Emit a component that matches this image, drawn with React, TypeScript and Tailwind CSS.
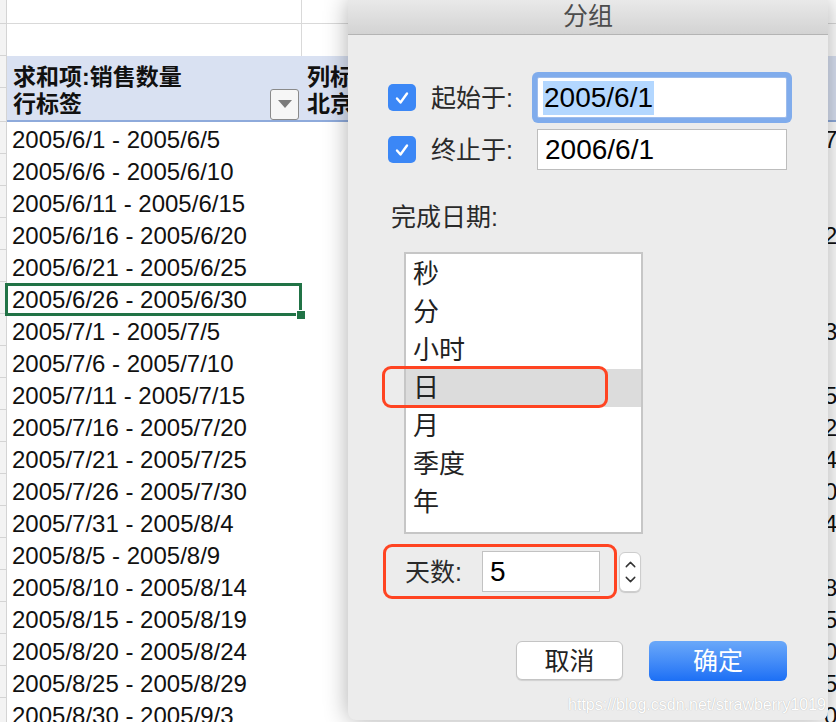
import { ChevronUp, ChevronDown } from "lucide-react";

const rows = [
  { range: "2005/6/1 - 2005/6/5", value: "7" },
  { range: "2005/6/6 - 2005/6/10", value: "" },
  { range: "2005/6/11 - 2005/6/15", value: "" },
  { range: "2005/6/16 - 2005/6/20", value: "27" },
  { range: "2005/6/21 - 2005/6/25", value: "" },
  { range: "2005/6/26 - 2005/6/30", value: "" },
  { range: "2005/7/1 - 2005/7/5", value: "30" },
  { range: "2005/7/6 - 2005/7/10", value: "" },
  { range: "2005/7/11 - 2005/7/15", value: "52" },
  { range: "2005/7/16 - 2005/7/20", value: "24" },
  { range: "2005/7/21 - 2005/7/25", value: "4" },
  { range: "2005/7/26 - 2005/7/30", value: "00" },
  { range: "2005/7/31 - 2005/8/4", value: "47" },
  { range: "2005/8/5 - 2005/8/9", value: "" },
  { range: "2005/8/10 - 2005/8/14", value: "8" },
  { range: "2005/8/15 - 2005/8/19", value: "54" },
  { range: "2005/8/20 - 2005/8/24", value: "04" },
  { range: "2005/8/25 - 2005/8/29", value: "50" },
  { range: "2005/8/30 - 2005/9/3", value: "03" },
];

const units = ["秒", "分", "小时", "日", "月", "季度", "年"];

function CheckBox() {
  return (
    <div className="w-[28px] h-[27px] shrink-0 rounded-[5px] bg-[#3b87f6] flex items-center justify-center">
      <svg width="18" height="18" viewBox="0 0 18 18">
        <path d="M4 9.5l3.5 4L14 4.5" fill="none" stroke="white" strokeWidth="2.4" strokeLinecap="round" strokeLinejoin="round" />
      </svg>
    </div>
  );
}

function Sheet() {
  return (
    <div className="w-[836px] text-[#111]">
      {/* rows above the pivot table */}
      <div className="flex h-[24px]">
        <div className="w-[7px] shrink-0 border-r border-b border-[#d4d4d4] bg-[#f3f3f3]" />
        <div className="w-[295px] shrink-0 border-r border-b border-[#d9d9d9]" />
        <div className="flex-1 border-b border-[#d9d9d9]" />
      </div>
      <div className="flex h-[32px]">
        <div className="w-[7px] shrink-0 border-r border-b border-[#d4d4d4] bg-[#f3f3f3]" />
        <div className="w-[295px] shrink-0 border-r border-[#d9d9d9]" />
        <div className="flex-1" />
      </div>

      {/* pivot header */}
      <div className="flex h-[32px] font-bold text-[23px] leading-[28px]">
        <div className="w-[7px] shrink-0 border-r border-b border-[#d4d4d4] bg-[#f3f3f3]" />
        <div className="w-[295px] shrink-0 bg-[#d9e1f2] pl-[6px] pt-[7px] whitespace-nowrap">求和项:销售数量</div>
        <div className="flex-1 bg-[#d9e1f2] pl-[5px] pt-[7px] whitespace-nowrap">列标签</div>
      </div>
      <div className="flex h-[34px] font-bold text-[23px] leading-[28px]">
        <div className="w-[7px] shrink-0 border-r border-b border-[#d4d4d4] bg-[#f3f3f3]" />
        <div className="w-[295px] shrink-0 bg-[#d9e1f2] border-b-2 border-[#8eaadb] pl-[6px] pr-[3px] flex items-center justify-between">
          <span className="whitespace-nowrap">行标签</span>
          <div className="w-[29px] h-[31px] rounded-[3px] border border-[#8a8a8a] bg-[#f6f6f6] flex items-center justify-center">
            <svg width="14" height="8" viewBox="0 0 14 8">
              <path d="M0 0h14L7 8z" fill="#7a7a7a" />
            </svg>
          </div>
        </div>
        <div className="flex-1 bg-[#d9e1f2] border-b-2 border-[#8eaadb] pl-[5px] flex items-center whitespace-nowrap">北京</div>
      </div>

      {/* data rows */}
      {rows.map((r, i) => (
        <div key={r.range} className="flex h-[32px] text-[24px] leading-[32px]">
          <div className="w-[7px] shrink-0 border-r border-b border-[#d4d4d4] bg-[#f3f3f3]" />
          <div className="relative w-[295px] shrink-0 pl-[5px] pt-[2px] whitespace-nowrap">
            {r.range}
            {i === 5 && (
              <div className="absolute left-[-2px] top-[1px] right-0 h-[33px] border-[3px] border-[#217346]">
                <div className="absolute right-[-7px] bottom-[-7px] w-[10px] h-[10px] bg-[#217346] border border-white" />
              </div>
            )}
          </div>
          <div className="flex-1 pl-[522px] pt-[2px] whitespace-nowrap overflow-hidden">{r.value}</div>
        </div>
      ))}
    </div>
  );
}

function GroupDialog() {
  return (
    <div className="absolute left-[348px] top-0 w-[480px] h-[720px] bg-[#ececec] rounded-b-[8px] shadow-[0_0_24px_rgba(0,0,0,0.32)] flex flex-col text-[#2a2a2a]">
      <div className="h-[35px] shrink-0 border-b border-[#b4b4b4] bg-gradient-to-b from-[#e9e9e9] to-[#d3d3d3] flex items-center justify-center text-[25px] leading-[30px] text-[#4d4d4d] pb-[3px]">
        分组
      </div>

      {/* start */}
      <div className="mt-[42px] pl-[40px] flex items-center h-[41px]">
        <CheckBox />
        <span className="ml-[15px] w-[106px] shrink-0 text-[25px] leading-[30px]">起始于:</span>
        <div className="w-[250px] h-[41px] bg-white border border-[#9dbcec] rounded-[2px] shadow-[0_0_0_5px_#80acec] flex items-center pl-[5px]">
          <span className="bg-[#b3d7ff] text-[28px] leading-[34px] text-black px-[1px]">2005/6/1</span>
        </div>
      </div>

      {/* end */}
      <div className="mt-[11px] pl-[40px] flex items-center h-[41px]">
        <CheckBox />
        <span className="ml-[15px] w-[106px] shrink-0 text-[25px] leading-[30px]">终止于:</span>
        <div className="w-[250px] h-[41px] bg-white border border-[#bdbdbd] flex items-center pl-[7px]">
          <span className="text-[28px] leading-[34px] text-black">2006/6/1</span>
        </div>
      </div>

      <div className="mt-[32px] pl-[43px] text-[25px] leading-[30px]">完成日期:</div>

      {/* units list */}
      <div className="relative mt-[20px] ml-[56px] w-[239px] h-[282px] bg-white border-2 border-[#c6c6c6] pt-[1px]">
        {units.map((u) => (
          <div
            key={u}
            className={`h-[38px] pl-[7px] text-[26px] leading-[38px] text-[#222] ${u === "日" ? "bg-[#dcdcdc]" : ""}`}
          >
            {u}
          </div>
        ))}
        <div className="absolute left-[-24px] top-[112px] w-[226px] h-[42px] rounded-[9px] border-[3px] border-[#ff4422]" />
      </div>

      {/* days */}
      <div className="mt-[17px] pl-[57px] flex items-center h-[41px]">
        <div className="relative flex items-center">
          <span className="w-[77px] shrink-0 text-[25px] leading-[30px]">天数:</span>
          <div className="w-[118px] h-[41px] bg-white border border-[#c2c2c2] flex items-center pl-[7px]">
            <span className="text-[28px] leading-[34px] text-black">5</span>
          </div>
          <div className="absolute left-[-22px] top-[-7px] w-[234px] h-[55px] rounded-[9px] border-[3px] border-[#ff4422]" />
        </div>
        <div className="ml-[19px] w-[22px] h-[40px] rounded-[6px] bg-white border border-[#cdcdcd] shadow-[0_1px_1px_rgba(0,0,0,0.15)] flex flex-col items-center justify-center">
          <ChevronUp size={17} strokeWidth={2} color="#333" className="-mb-[1px]" />
          <ChevronDown size={17} strokeWidth={2} color="#333" className="-mt-[1px]" />
        </div>
      </div>

      {/* buttons */}
      <div className="mt-[49px] pr-[41px] flex justify-end gap-[26px]">
        <div className="w-[107px] h-[39px] rounded-[6px] bg-white border border-[#c4c4c4] shadow-[0_1px_1px_rgba(0,0,0,0.12)] flex items-center justify-center text-[25px] leading-[30px] text-[#222]">
          取消
        </div>
        <div className="w-[138px] h-[40px] rounded-[6px] bg-gradient-to-b from-[#6aa8f9] to-[#1b6ff5] flex items-center justify-center text-[25px] leading-[30px] text-white">
          确定
        </div>
      </div>

      <div className="absolute right-[2px] bottom-[6px] text-[16px] leading-[18px] text-white font-['Liberation_Sans',sans-serif] [text-shadow:0_0_1px_rgba(0,0,0,0.3)] whitespace-nowrap">
        https://blog.csdn.net/strawberry1019
      </div>
    </div>
  );
}

export default function App() {
  return (
    <div className="relative w-[836px] h-[722px] overflow-hidden bg-white font-['Liberation_Sans','Noto_Sans_CJK_SC',sans-serif]">
      <Sheet />
      <GroupDialog />
    </div>
  );
}
